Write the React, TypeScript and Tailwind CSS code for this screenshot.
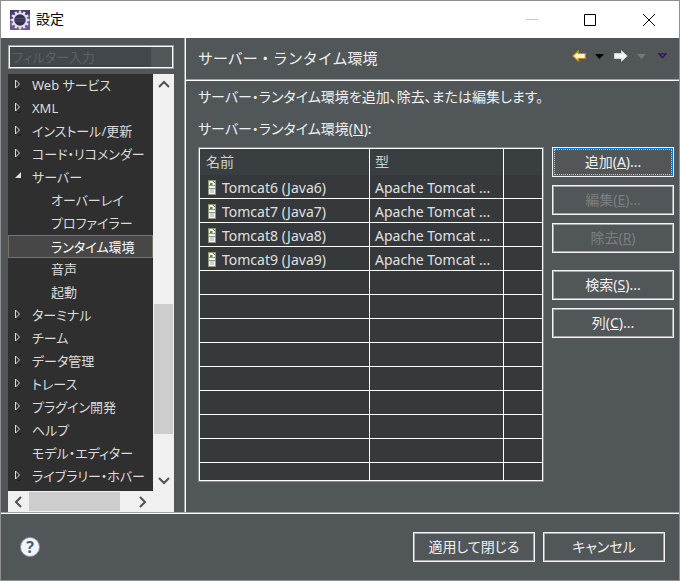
import type { ReactNode } from 'react';

type TreeItem = { label: string; level: 0 | 1; state?: 'open' | 'closed'; selected?: boolean };

const TREE: TreeItem[] = [
  { label: 'Web サービス', level: 0, state: 'closed' },
  { label: 'XML', level: 0, state: 'closed' },
  { label: 'インストール/更新', level: 0, state: 'closed' },
  { label: 'コード・リコメンダー', level: 0, state: 'closed' },
  { label: 'サーバー', level: 0, state: 'open' },
  { label: 'オーバーレイ', level: 1 },
  { label: 'プロファイラー', level: 1 },
  { label: 'ランタイム環境', level: 1, selected: true },
  { label: '音声', level: 1 },
  { label: '起動', level: 1 },
  { label: 'ターミナル', level: 0, state: 'closed' },
  { label: 'チーム', level: 0, state: 'closed' },
  { label: 'データ管理', level: 0, state: 'closed' },
  { label: 'トレース', level: 0, state: 'closed' },
  { label: 'プラグイン開発', level: 0, state: 'closed' },
  { label: 'ヘルプ', level: 0, state: 'closed' },
  { label: 'モデル・エディター', level: 0 },
  { label: 'ライブラリー・ホバー', level: 0, state: 'closed' },
];

const RUNTIMES = [6, 7, 8, 9].map((n) => ({ name: `Tomcat${n} (Java${n})`, type: 'Apache Tomcat ...' }));
const EMPTY_ROWS = Array.from({ length: 9 }, (_, i) => i);

function GearIcon() {
  const teeth = Array.from({ length: 12 }, (_, i) => i * 30);
  return (
    <svg width="20" height="20" viewBox="0 0 20 20" aria-hidden="true">
      <rect width="20" height="20" fill="#4a3a6c" />
      <path d="M0 20V12l20-7v15z" fill="#6c5799" />
      {teeth.map((a) => <rect key={a} x="8.8" y=".6" width="2.4" height="4" fill="#e4e1e6" transform={`rotate(${a} 10 10)`} />)}
      <circle cx="10" cy="10" r="6.600" fill="#35304f" stroke="#e4e1e6" strokeWidth="1.800" />
      <path d="M4.500 8.500h11M4.500 11h11" stroke="#555070" />
    </svg>
  );
}

function Twisty({ state }: { state?: 'open' | 'closed' }) {
  return (
    <svg width="9" height="12" viewBox="0 0 9 12" className="shrink-0" aria-hidden="true">
      {state === 'closed' && <path d="M.5 1v8l4-4z" fill="none" stroke="#dcdcdc" />}
      {state === 'closed' && <path d="M3 10h2v1H3zM5 9h1v1H5z" fill="#181818" />}
      {state === 'open' && <path d="M6 1v6H0z" fill="#e0e0e0" />}
    </svg>
  );
}

function ServerIcon() {
  return (
    <svg width="8" height="15" viewBox="0 0 8 15" className="shrink-0" aria-hidden="true">
      <rect width="8" height="15" fill="#8f9575" />
      <rect x="1" y="1" width="6" height="13" fill="#f2f4ee" />
      <path d="M2 3h2v2H2z" fill="#2f9a44" />
      <path d="M4 3h1v2H4z" fill="#8fc99a" />
      <path d="M5 1h1v1H5zM6 2h1v1H6z" fill="#6a755f" />
      <path d="M1 5.500h6M1 8.500h6" stroke="#8f9575" />
      <rect x="2" y="9" width="4" height="4" fill="#c5cbe8" />
    </svg>
  );
}

function Chevron({ d }: { d: string }) {
  return (
    <svg width="12" height="12" viewBox="0 0 12 12" aria-hidden="true">
      <path d={d} fill="none" stroke="#505050" strokeWidth="2" />
    </svg>
  );
}

function PushButton({ children, disabled, primary, className = '' }: { children: ReactNode; disabled?: boolean; primary?: boolean; className?: string }) {
  return (
    <button
      type="button"
      disabled={disabled}
      className={`h-[30px] w-[122px] border border-[#f4f4f4] text-[#f0f0f0] disabled:text-[#7b7f81] ${className}`}
    >
      <span className={`flex h-full items-center justify-center border ${primary ? 'border-[#0078d7]' : 'border-[#a5a7a8]'}`}>
        <span className={`flex h-full w-full items-center justify-center ${primary ? 'border border-dotted border-[#c8c8c8]' : ''}`}>
          <span>{children}</span>
        </span>
      </span>
    </button>
  );
}

function TitleBar() {
  return (
    <header className="flex h-[37px] shrink-0 items-center bg-white pl-[9px] text-black">
      <GearIcon />
      <h1 className="flex-1 pb-0.5 pl-[6px] text-sm">設定</h1>
      <button type="button" aria-label="最小化" className="flex h-full w-[58px] items-center justify-center">
        <svg width="12" height="12"><path d="M0 5.500h12" stroke="#c8c8c8" /></svg>
      </button>
      <button type="button" aria-label="最大化" className="flex h-full w-[58px] items-center justify-center">
        <svg width="12" height="12"><path d="M.5.5h11v11H.5z" fill="none" stroke="#000" /></svg>
      </button>
      <button type="button" aria-label="閉じる" className="flex h-full w-[60px] items-center justify-center">
        <svg width="12" height="12"><path d="M0 0l12 12M12 0L0 12" stroke="#000" /></svg>
      </button>
    </header>
  );
}

function Sidebar() {
  return (
    <nav className="flex w-[183px] shrink-0 flex-col pl-[7px] pt-[7px]">
      <div className="flex h-6 w-[166px] border border-[#9da0a1]">
        <div className="flex w-full border border-white">
          <input
            aria-label="フィルター入力"
            placeholder="フィルター入力"
            className="w-[141px] bg-[#41474a] pl-0.5 text-[13px] outline-none placeholder:text-[#5d6264]"
          />
        </div>
      </div>
      <div className="mt-[5px] flex min-h-0 w-[166px] flex-1">
        <div className="flex w-[145px] flex-col">
          <ul className="min-h-0 flex-1 overflow-hidden bg-[#2f2f2f] text-[13px] text-[#dcdcdc]">
            {TREE.map((item) => (
              <li
                key={item.label}
                className={`flex h-[23px] items-center whitespace-nowrap ${item.selected ? 'border border-[#77745c] bg-[#474747] pl-[6px] text-white' : 'pl-[7px] pb-px'}`}
              >
                <Twisty state={item.state} />
                <span className={item.level === 1 ? 'pl-[27px]' : 'pl-2'}>{item.label}</span>
              </li>
            ))}
          </ul>
          <div className="flex h-[21px] shrink-0 items-center bg-[#f0f0f0]">
            <button type="button" aria-label="左へ" className="flex w-[21px] justify-center"><Chevron d="M8 1L3 6l5 5" /></button>
            <div className="h-[19px] w-[91px] bg-[#cdcdcd]" />
            <div className="flex-1" />
            <button type="button" aria-label="右へ" className="flex w-[21px] justify-center"><Chevron d="M3 1l5 5-5 5" /></button>
          </div>
        </div>
        <div className="flex flex-1 flex-col bg-[#f0f0f0] pb-[21px]">
          <button type="button" aria-label="上へ" className="flex h-[21px] items-center justify-center"><Chevron d="M1 8l5-5 5 5" /></button>
          <div className="flex-[209]" />
          <div className="mx-px flex-[130] bg-[#cdcdcd]" />
          <div className="flex-[36]" />
          <button type="button" aria-label="下へ" className="flex h-[21px] items-center justify-center"><Chevron d="M1 3l5 5 5-5" /></button>
        </div>
      </div>
    </nav>
  );
}

function NavArrows() {
  return (
    <div className="flex items-center pb-[5px]">
      <button type="button" aria-label="戻る">
        <svg width="14" height="12" viewBox="0 0 14 12"><path d="M.8 6L6.500.8V3.500h6.800v5H6.500v2.700z" fill="#fff3c8" stroke="#c98a1c" strokeWidth="1.200" /></svg>
      </button>
      <button type="button" aria-label="戻る履歴" className="ml-[9px]">
        <svg width="9" height="5" viewBox="0 0 9 5"><path d="M0 0h9L4.500 5z" fill="#000" /></svg>
      </button>
      <button type="button" aria-label="進む" className="ml-[10px]">
        <svg width="14" height="12" viewBox="0 0 14 12"><path d="M13.200 6L7.500.8V3.500H.5v5h7v2.700z" fill="#f4f4f4" stroke="#d2d2d2" /></svg>
      </button>
      <button type="button" aria-label="進む履歴" className="ml-[9px]">
        <svg width="9" height="5" viewBox="0 0 9 5"><path d="M0 0h9L4.500 5z" fill="#76797a" /></svg>
      </button>
      <button type="button" aria-label="メニュー" className="ml-3">
        <svg width="9" height="6" viewBox="0 0 9 6"><path d="M1 .8h7L4.500 4.800z" fill="#515658" stroke="#2f1658" strokeWidth="1.300" /></svg>
      </button>
    </div>
  );
}

function RuntimeTable() {
  const cell = 'border-b border-r border-white';
  return (
    <div className="min-h-0 min-w-0 flex-1 overflow-hidden border border-[#85898b]">
      <div className="h-full overflow-hidden border border-white bg-[#35393c]">
        <table aria-labelledby="runtimes-label" className="w-full table-fixed border-separate border-spacing-0 whitespace-nowrap text-left text-[#e0e0e0]">
          <colgroup>
            <col className="w-[170px]" />
            <col className="w-[134px]" />
            <col />
          </colgroup>
          <thead>
            <tr className="h-[26px] bg-[#393e40]">
              <th className="border-r border-white p-0 pl-[6px] font-normal text-[#cfcfcf]">名前</th>
              <th className="border-r border-white p-0 pl-[5px] font-normal text-[#cfcfcf]">型</th>
              <th className="p-0" />
            </tr>
          </thead>
          <tbody>
            {RUNTIMES.map((r) => (
              <tr key={r.name} className="h-6">
                <td className={`${cell} p-0 pl-2 pt-0.5`}>
                  <div className="flex items-center gap-[6px] leading-5"><ServerIcon />{r.name}</div>
                </td>
                <td className={`${cell} p-0 pl-[5px] pt-0.5 leading-5`}>{r.type}</td>
                <td className="border-b border-white p-0" />
              </tr>
            ))}
            {EMPTY_ROWS.map((i) => (
              <tr key={i} className="h-6">
                <td className={`${cell} p-0`} />
                <td className={`${cell} p-0`} />
                <td className="border-b border-white p-0" />
              </tr>
            ))}
          </tbody>
        </table>
      </div>
    </div>
  );
}

export default function App() {
  return (
    <div className="flex h-screen min-h-[480px] flex-col border border-[#8f8f8f] bg-[#515658] font-['Noto_Sans','Noto_Sans_CJK_JP',sans-serif] text-sm leading-5 text-[#f0f0f0] [font-feature-settings:'palt']" lang="ja">
      <TitleBar />
      <div className="flex min-h-0 flex-1">
        <Sidebar />
        <main className="flex min-w-0 flex-1 flex-col border-l border-[#9da0a1]">
          <div className="flex min-h-0 flex-1 flex-col border-l border-white">
            <div className="flex h-[42px] shrink-0 items-center justify-between border-b border-[#9da0a1] pl-3 pr-3">
              <h2 className="pb-0.5 text-[15px] [font-feature-settings:normal]">サーバー・ランタイム環境</h2>
              <NavArrows />
            </div>
            <div className="flex min-h-0 flex-1 flex-col border-t border-white pl-3 pr-[5px]">
              <p className="mt-[6px]">サーバー・ランタイム環境を追加、除去、または編集します。</p>
              <p id="runtimes-label" className="mt-3">サーバー・ランタイム環境(<u>N</u>):</p>
              <div className="mb-[30px] mt-2 flex min-h-0 flex-1 gap-2">
                <RuntimeTable />
                <div className="flex shrink-0 flex-col gap-2">
                  <PushButton primary>追加(<u>A</u>)...</PushButton>
                  <PushButton disabled>編集(<u>E</u>)...</PushButton>
                  <PushButton disabled>除去(<u>R</u>)</PushButton>
                  <PushButton className="mt-[9px]">検索(<u>S</u>)...</PushButton>
                  <PushButton>列(<u>C</u>)...</PushButton>
                </div>
              </div>
            </div>
          </div>
        </main>
      </div>
      <footer className="shrink-0 border-t border-[#9da0a1]">
        <div className="flex h-[67px] items-center gap-2 border-t border-white pl-[19px] pr-[14px]">
          <button type="button" aria-label="ヘルプ" className="h-5 w-5 rounded-full border border-[#8b94a8] bg-[#f4f5f8] text-base font-bold leading-[18px] text-[#4a5a80]">?</button>
          <div className="flex-1" />
          <PushButton>適用して閉じる</PushButton>
          <PushButton>キャンセル</PushButton>
        </div>
      </footer>
    </div>
  );
}
